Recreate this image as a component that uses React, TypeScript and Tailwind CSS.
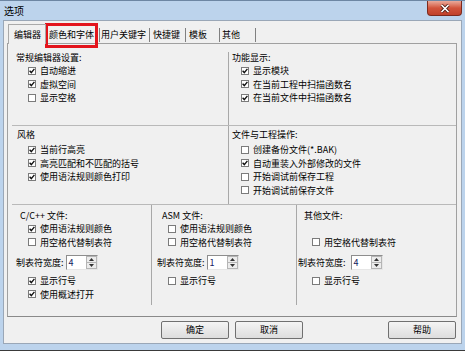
const Check = ({ checked, label }: { checked?: boolean; label: string }) => (
  <div className="flex items-center h-[13.5px] gap-[4px]">
    <span className="w-[8px] h-[8px] border border-[#7b7b7b] bg-white flex items-center justify-center shrink-0">
      {checked && (
        <svg width="6" height="6" viewBox="0 0 6 6">
          <path d="M0.6 2.8 L2.3 4.6 L5.4 0.9" stroke="#111" strokeWidth="1.4" fill="none" />
        </svg>
      )}
    </span>
    <span className="whitespace-nowrap">{label}</span>
  </div>
);

const Spin = ({ value }: { value: string }) => (
  <div className="flex h-[15px] w-[32px] border border-[#8d8d8d] border-r-[#e6e6e6] border-b-[#e6e6e6] bg-white">
    <div className="flex-1 leading-[13px] pl-[2px] text-[#102060]">{value}</div>
    <div className="w-[11px] flex flex-col">
      <div className="flex-1 bg-[#ececec] border border-[#b5b5b5] flex items-center justify-center">
        <svg width="5" height="3" viewBox="0 0 5 3">
          <path d="M0 3 L2.5 0 L5 3Z" fill="#333" />
        </svg>
      </div>
      <div className="flex-1 bg-[#ececec] border border-t-0 border-[#b5b5b5] flex items-center justify-center">
        <svg width="5" height="3" viewBox="0 0 5 3">
          <path d="M0 0 L2.5 3 L5 0Z" fill="#333" />
        </svg>
      </div>
    </div>
  </div>
);

const Button = ({ label, className }: { label: string; className?: string }) => (
  <button
    className={`w-[68px] h-[18px] rounded-[2px] border border-[#707070] bg-gradient-to-b from-[#f4f4f4] to-[#dddddd] leading-[16px] text-black ${className ?? ''}`}
  >
    {label}
  </button>
);

const App = () => {
  return (
    <div className="w-[465px] h-[351px] flex flex-col bg-[#bcd3ec] border-t border-[#6d86a3] border-b border-b-[#3a3a3a] text-[9px] text-black font-['Noto_Sans_CJK_SC','Noto_Sans',sans-serif] overflow-hidden">
      {/* title bar */}
      <div className="h-[19px] flex items-start">
        <span className="pl-[4px] pt-[3px] text-[10px] leading-[13px]">选项</span>
        <div className="ml-auto mr-[3px] w-[35px] h-[15px] rounded-b-[4px] border border-t-0 border-[#7d2a1e] bg-gradient-to-b from-[#e9aa9b] via-[#d2543c] to-[#c0412b] flex items-center justify-center">
          <svg width="10" height="9" viewBox="0 0 10 9">
            <path d="M1.5 1 L8.5 8 M8.5 1 L1.5 8" stroke="#4a1a12" strokeWidth="3.2" />
            <path d="M1.5 1 L8.5 8 M8.5 1 L1.5 8" stroke="#ffffff" strokeWidth="1.7" />
          </svg>
        </div>
      </div>

      {/* client */}
      <div className="relative mx-[3px] mb-[6px] flex flex-col bg-[#f0f0f0] border border-[#9aa7b7] pt-[3px] pb-[4px]">
        {/* tabs */}
        <div className="flex items-start h-[19px] pl-[4px]">
          <div className="relative z-10 w-[38px] h-[20px] bg-[#f0f0f0] border border-b-0 border-[#a9a9a9] leading-[19px] pl-[5px]">
            编辑器
          </div>
          <div className="w-[54px] mt-[4px] h-[14px] leading-[13px] pl-[3px] border-r border-[#808080]">颜色和字体</div>
          <div className="w-[50px] mt-[4px] h-[14px] leading-[13px] pl-[1px] border-r border-[#808080]">用户关键字</div>
          <div className="w-[36px] mt-[4px] h-[14px] leading-[13px] pl-[3px] border-r border-[#808080]">快捷键</div>
          <div className="w-[34px] mt-[4px] h-[14px] leading-[13px] pl-[3px] border-r border-[#808080]">模板</div>
          <div className="w-[36px] mt-[4px] h-[14px] leading-[13px] pl-[2px] border-r border-[#808080]">其他</div>
        </div>

        {/* panel */}
        <div className="ml-[3px] w-[450px] h-[274px] border border-[#a0a0a0] border-b-[#8a8a8a] pt-[8px] pb-[11px] pl-[4px] flex flex-col">
          {/* row A */}
          <div className="h-[74px] flex border-b border-[#b9b9b9]">
            <div className="w-[217px] border-r border-[#a8a8a8] pl-[4px]">
              <div className="leading-[12px]">常规编辑器设置:</div>
              <div className="pl-[12px]">
                <Check checked label="自动缩进" />
                <Check checked label="虚拟空间" />
                <Check label="显示空格" />
              </div>
            </div>
            <div className="flex-1 pl-[3px]">
              <div className="leading-[12px]">功能显示:</div>
              <div className="pl-[9px]">
                <Check checked label="显示模块" />
                <Check checked label="在当前工程中扫描函数名" />
                <Check checked label="在当前文件中扫描函数名" />
              </div>
            </div>
          </div>

          {/* row B */}
          <div className="h-[79px] flex border-b border-[#b9b9b9]">
            <div className="w-[217px] border-r border-[#a8a8a8] pl-[5px] pt-[3px]">
              <div className="leading-[12px] mb-[2px]">风格</div>
              <div className="pl-[11px]">
                <Check checked label="当前行高亮" />
                <Check checked label="高亮匹配和不匹配的括号" />
                <Check checked label="使用语法规则颜色打印" />
              </div>
            </div>
            <div className="flex-1 pl-[3px] pt-[3px]">
              <div className="leading-[12px] mb-[2px]">文件与工程操作:</div>
              <div className="pl-[9px]">
                <Check label="创建备份文件(*.BAK)" />
                <Check checked label="自动重装入外部修改的文件" />
                <Check label="开始调试前保存工程" />
                <Check label="开始调试前保存文件" />
              </div>
            </div>
          </div>

          {/* row C */}
          <div className="h-[100px] flex">
            <div className="w-[140px] border-r border-[#a8a8a8] pt-[5px]">
              <div className="leading-[12px] pl-[8px]">C/C++ 文件:</div>
              <div className="pl-[16px]">
                <Check checked label="使用语法规则颜色" />
                <Check label="用空格代替制表符" />
              </div>
              <div className="flex items-center gap-[2px] mt-[6px] pl-[4px]">
                <span>制表符宽度:</span>
                <Spin value="4" />
              </div>
              <div className="pl-[16px] mt-[4px]">
                <Check checked label="显示行号" />
                <Check checked label="使用概述打开" />
              </div>
            </div>
            <div className="w-[145px] border-r border-[#a8a8a8] pt-[5px]">
              <div className="leading-[12px] pl-[10px]">ASM 文件:</div>
              <div className="pl-[16px]">
                <Check label="使用语法规则颜色" />
                <Check label="用空格代替制表符" />
              </div>
              <div className="flex items-center gap-[2px] mt-[6px] pl-[5px]">
                <span>制表符宽度:</span>
                <Spin value="1" />
              </div>
              <div className="pl-[16px] mt-[4px]">
                <Check label="显示行号" />
              </div>
            </div>
            <div className="flex-1 pt-[5px]">
              <div className="leading-[12px] pl-[7px]">其他文件:</div>
              <div className="pl-[15px]">
                <div className="h-[13.5px]" />
                <Check label="用空格代替制表符" />
              </div>
              <div className="flex items-center gap-[5px] mt-[6px] pl-[1px]">
                <span>制表符宽度:</span>
                <Spin value="4" />
              </div>
              <div className="pl-[15px] mt-[4px]">
                <Check label="显示行号" />
              </div>
            </div>
          </div>
        </div>

        {/* buttons */}
        <div className="flex mt-[4px] h-[18px]">
          <Button label="确定" className="ml-[157px]" />
          <Button label="取消" className="ml-[6px]" />
          <Button label="帮助" className="ml-[85px]" />
        </div>

        {/* red annotation box */}
        <div className="absolute left-[41px] top-[2px] w-[53px] h-[25px] border-[3px] border-[#e3141c]" />
      </div>
    </div>
  );
};

export default App;
